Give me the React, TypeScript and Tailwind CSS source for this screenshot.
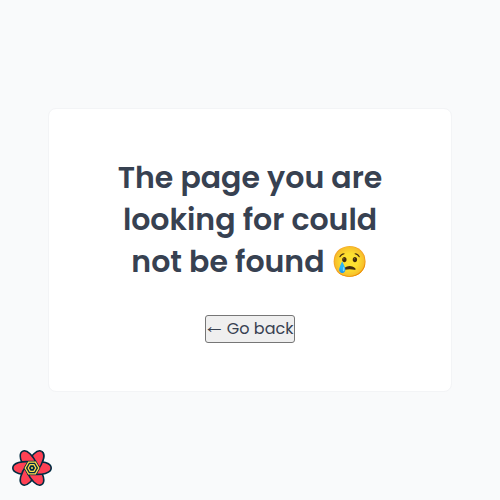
const petal = "M0 -6 C10 -7.4 19.2 -5 19.2 0 C19.2 5 10 7.4 0 6 Z";

function Petal({ angle, half = false }: { angle: number; half?: boolean }) {
  return (
    <g transform={`rotate(${angle})`} clipPath={half ? "url(#lower-half)" : undefined}>
      <path d={petal} fill="#ff4154" stroke="#002b41" strokeWidth="1.6" />
    </g>
  );
}

function FlowerLogo() {
  return (
    <svg className="size-10" viewBox="-20 -20 40 40" aria-hidden="true">
      <clipPath id="lower-half">
        <rect x="0" y="0" width="20" height="10" />
      </clipPath>
      {[300, 240, 180, 120, 60, 0].map((angle) => (
        <Petal key={angle} angle={angle} />
      ))}
      <Petal angle={300} half />
      <path d="M-8.4 0 L-4.2 -7.27 H4.2 L8.4 0 L4.2 7.27 H-4.2Z" fill="#002b41" />
      <path d="M-6.8 0 L-3.4 -5.89 H3.4 L6.8 0 L3.4 5.89 H-3.4Z" fill="#002b41" stroke="#ffd94c" strokeWidth="1.3" />
      <path d="M-3.8 0 L-1.9 -3.29 H1.9 L3.8 0 L1.9 3.29 H-1.9Z" fill="#002b41" stroke="#ffd94c" strokeWidth="1.3" />
      <circle r="1" fill="#ffd94c" />
    </svg>
  );
}

export default function App() {
  return (
    <div className="relative flex h-screen w-screen items-center justify-center bg-[#f9fafb] font-['Poppins','Liberation_Sans',sans-serif] text-[#374151]">
      <main className="flex h-[284px] w-[404px] flex-col items-center rounded-lg border border-[#f3f4f6] bg-white px-12 pt-12">
        <h1 className="w-[306px] text-center text-[30px] leading-[42px] font-semibold">
          The page you are looking for could not be found <span className="-ml-px mr-px">😢</span>
        </h1>
        <button className="mt-8 flex h-7 w-[90px] items-center justify-center rounded-[3px] border border-[#767676] bg-[#efefef] text-base leading-6 whitespace-pre">
          <span className="-mx-[3px] w-[22px] pb-[7px] font-['Liberation_Serif',serif] text-[22px] leading-5">←</span>
          <span> Go back</span>
        </button>
      </main>
      <button className="absolute bottom-3 left-3" aria-label="Open devtools">
        <FlowerLogo />
      </button>
    </div>
  );
}
